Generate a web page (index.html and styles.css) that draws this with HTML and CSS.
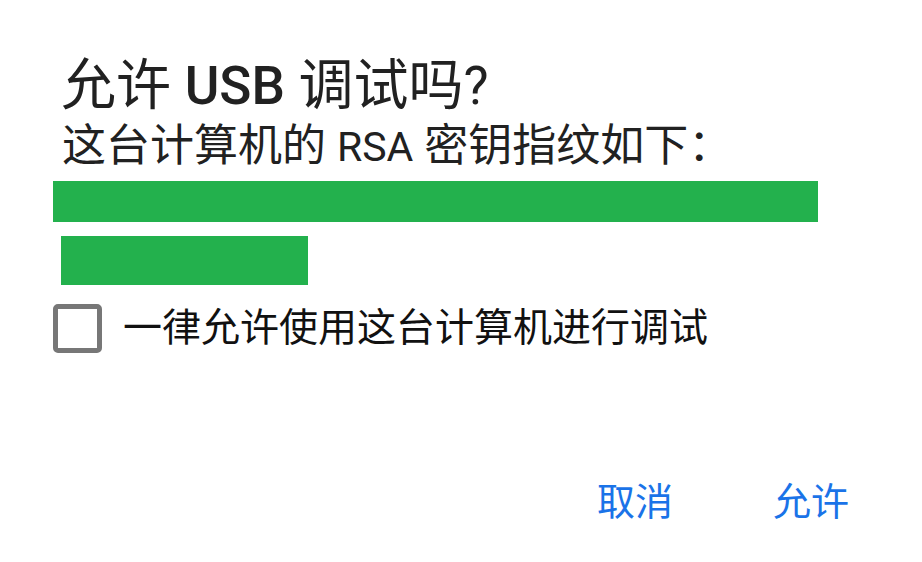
FILE: index.html
```html
<!DOCTYPE html>
<html lang="zh-CN">
<head>
<meta charset="utf-8">
<link rel="stylesheet" href="styles.css">
</head>
<body>
<div class="dialog">
  <h1 class="title">允许 <span class="latin bold">USB</span> 调试吗<span class="latin">?</span></h1>
  <p class="subtitle">这台计算机的 <span class="latin">RSA</span> 密钥指纹如下：</p>
  <div class="bar bar-long"></div>
  <div class="bar bar-short"></div>
  <label class="check-row">
    <span class="checkbox"></span>
    <span class="check-label">一律允许使用这台计算机进行调试</span>
  </label>
  <div class="actions">
    <span class="btn btn-cancel">取消</span>
    <span class="btn btn-ok">允许</span>
  </div>
</div>
</body>
</html>
```
FILE: styles.css
```css
html, body {
  margin: 0;
  padding: 0;
  background: #ffffff;
}
body {
  width: 922px;
  height: 562px;
  overflow: hidden;
  font-family: Roboto, "Noto Sans CJK SC", sans-serif;
  color: #212121;
}
.dialog {
  display: flex;
  flex-direction: column;
  padding: 52px 0 0 53px;
}
.latin {
  line-height: 1;
}
.title {
  margin: 0 0 0 8px;
  font-size: 55px;
  font-weight: 400;
  line-height: 66px;
}
.title .latin {
  font-size: 53px;
}
.title .bold {
  font-weight: 500;
}
.subtitle {
  margin: 0 0 0 9px;
  font-size: 44px;
  line-height: 56px;
}
.subtitle .latin {
  font-size: 41px;
}
.bar {
  background: #23b14d;
}
.bar-long {
  width: 765px;
  height: 41px;
  margin-top: 7px;
}
.bar-short {
  width: 247px;
  height: 49px;
  margin: 14px 0 0 8px;
}
.check-row {
  display: flex;
  align-items: center;
  gap: 21px;
  margin-top: 18px;
}
.checkbox {
  box-sizing: border-box;
  width: 49px;
  height: 49px;
  border: 5px solid #777777;
  border-radius: 5px;
}
.check-label {
  font-size: 39px;
  line-height: 50px;
  color: #111111;
}
.actions {
  display: flex;
  justify-content: flex-end;
  gap: 100px;
  margin-top: 124px;
  padding-right: 73px;
}
.btn {
  font-size: 38px;
  line-height: 50px;
  color: #1a73e8;
}
```
